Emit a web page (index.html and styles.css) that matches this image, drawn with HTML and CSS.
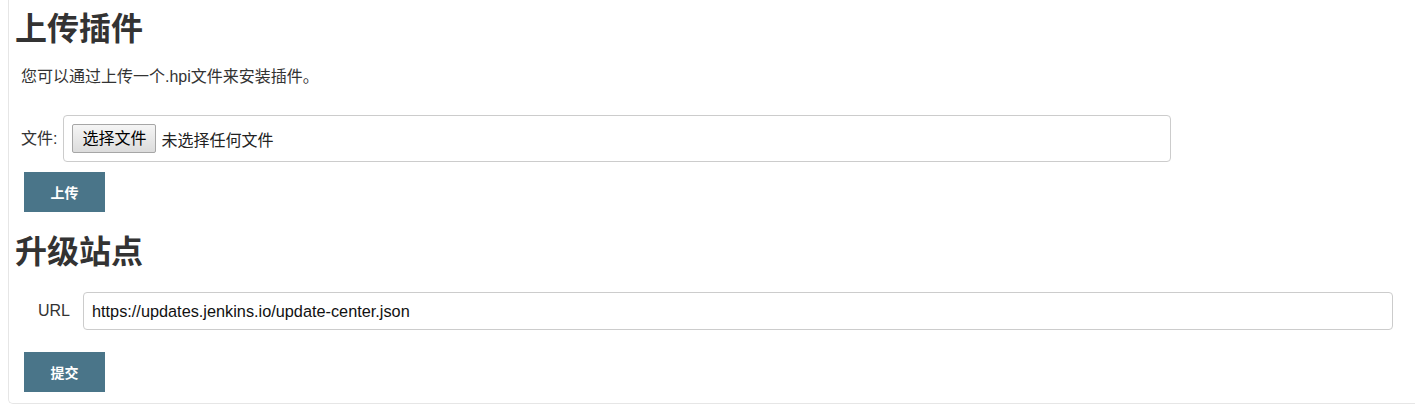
FILE: index.html
```html
<!DOCTYPE html>
<html lang="zh-CN">
<head>
<meta charset="utf-8">
<title>上传插件</title>
<link rel="stylesheet" href="styles.css">
</head>
<body>
<div class="panel">
  <h1 class="title">上传插件</h1>
  <p class="intro">您可以通过上传一个.hpi文件来安装插件。</p>
  <div class="file-row">
    <span class="label">文件:</span>
    <div class="file-box">
      <span class="file-btn">选择文件</span>
      <span class="file-none">未选择任何文件</span>
    </div>
  </div>
  <div class="actions"><span class="btn">上传</span></div>
  <h2 class="title">升级站点</h2>
  <div class="url-row">
    <span class="label url-label">URL</span>
    <div class="url-box">https://updates.jenkins.io/update-center.json</div>
  </div>
  <div class="actions"><span class="btn">提交</span></div>
</div>
</body>
</html>
```
FILE: styles.css
```css
html, body {
  margin: 0;
  padding: 0;
  background: #fff;
}
body {
  padding: 0 0 11px 8px;
  font-family: "Liberation Sans", "Noto Sans CJK SC", sans-serif;
  font-size: 16px;
  color: #333;
}
.panel {
  border-left: 1px solid #e6e6e6;
  border-bottom: 1px solid #e6e6e6;
  border-bottom-left-radius: 5px;
  padding: 0 22px 11px 6px;
}
.title {
  font-family: "Noto Sans CJK SC", sans-serif;
  font-size: 32px;
  font-weight: 700;
  line-height: 40px;
  margin: 0;
  color: #333;
}
h1.title { padding-top: 6px; }
h2.title { margin-top: 17px; }
.intro {
  margin: 19px 0 0 6px;
  line-height: 24px;
}
.file-row {
  display: flex;
  align-items: center;
  margin: 26px 0 0 6px;
}
.label {
  line-height: 24px;
}
.file-row .label { margin-right: 6px; }
.file-box {
  width: 1091px;
  display: flex;
  align-items: center;
  gap: 5px;
  border: 1px solid #ccc;
  border-radius: 4px;
  padding: 8px 7px 8px 8px;
}
.file-btn {
  display: inline-block;
  padding: 0 9px;
  height: 27px;
  line-height: 27px;
  border: 1px solid #a6a6a6;
  border-radius: 2px;
  background: linear-gradient(#f5f5f5, #dcdcdc);
  color: #000;
}
.file-none { color: #222; }
.actions {
  margin: 10px 0 0 9px;
}
.btn {
  display: inline-block;
  width: 81px;
  height: 40px;
  line-height: 40px;
  text-align: center;
  background: #4a7589;
  color: #fff;
  font-family: "Noto Sans CJK SC", sans-serif;
  font-weight: 700;
  font-size: 14px;
}
.url-row {
  display: flex;
  align-items: center;
  margin-top: 23px;
}
.url-label {
  padding-left: 23px;
  margin-right: 13px;
}
.url-box {
  flex: 1;
  border: 1px solid #ccc;
  border-radius: 4px;
  height: 36px;
  line-height: 36px;
  padding: 0 8px;
  color: #111;
  font-size: 16.3px;
}
.url-row + .actions { margin-top: 22px; }
```
